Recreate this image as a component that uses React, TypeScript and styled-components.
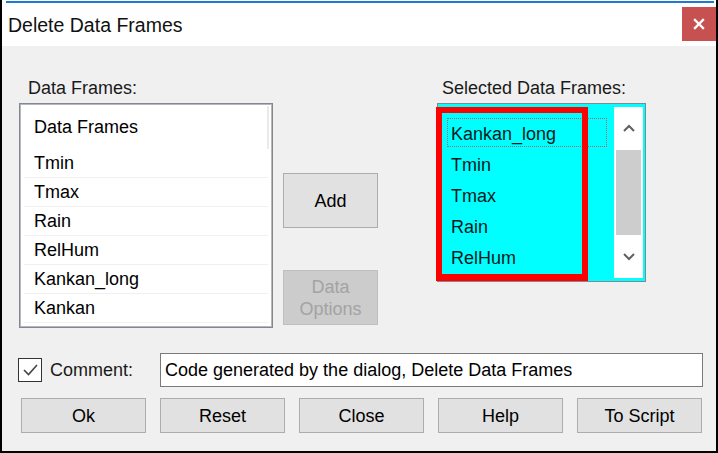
import React from "react";
import styled, { createGlobalStyle } from "styled-components";

const Global = createGlobalStyle`
  html, body { margin: 0; padding: 0; background: #ffffff; }
  body { font-family: "Liberation Sans", Arial, sans-serif; }
  * { box-sizing: border-box; }
`;

const Window = styled.div`
  width: 718px;
  height: 453px;
  display: flex;
  flex-direction: column;
  border-left: 2px solid #000;
  border-right: 2px solid #000;
  border-bottom: 2px solid #000;
  background: #f0f0f0;
  font-family: "Liberation Sans", Arial, sans-serif;
  font-size: 18px;
  color: #000;
`;

const TitleBar = styled.div`
  position: relative;
  height: 46px;
  flex: none;
  display: flex;
  align-items: center;
  justify-content: space-between;
  background: #ffffff;
  &::before {
    content: "";
    position: absolute;
    top: 1px;
    left: 4px;
    right: 2px;
    height: 2px;
    background: #1c7ad4;
  }
`;

const Title = styled.div`
  margin-left: 6px;
  margin-top: 5px;
  font-family: "Liberation Sans", Arial, sans-serif;
  font-size: 19.5px;
  color: #111;
`;

const CloseButton = styled.div`
  width: 34px;
  height: 34px;
  margin-top: 2px;
  background: #c75050;
  display: flex;
  align-items: center;
  justify-content: center;
`;

const Body = styled.div`
  flex: 1;
  display: flex;
  flex-direction: column;
  padding: 32px 0 0 17px;
`;

const TopArea = styled.div`
  display: flex;
  align-items: flex-start;
  height: 250px;
`;

const Column = styled.div<{ $width: number; $ml?: number }>`
  position: relative;
  width: ${(p) => p.$width}px;
  margin-left: ${(p) => p.$ml ?? 0}px;
  display: flex;
  flex-direction: column;
`;

const FieldLabel = styled.div<{ $pl: number }>`
  height: 20px;
  line-height: 20px;
  padding-left: ${(p) => p.$pl}px;
  margin-bottom: 5px;
  color: #1a1a1a;
  white-space: nowrap;
`;

const ListView = styled.div`
  width: 254px;
  height: 225px;
  background: #fff;
  border: 1px solid #828790;
  box-shadow: inset 0 0 0 1px #b4b8be;
  padding: 2px 2px 0 2px;
  overflow: hidden;
`;

const HeaderRow = styled.div`
  height: 43px;
  display: flex;
`;

const HeaderCell = styled.div`
  width: 247px;
  display: flex;
  align-items: center;
  padding-left: 12px;
  border-right: 2px solid #eaeaea;
`;

const Row = styled.div`
  height: 29px;
  line-height: 29px;
  margin: 0 2px 0 2px;
  padding-left: 10px;
  border-bottom: 1px solid #f0f0f0;
  white-space: nowrap;
`;

const MidColumn = styled.div`
  width: 95px;
  margin-left: 10px;
  padding-top: 95px;
  display: flex;
  flex-direction: column;
  gap: 42px;
`;

const Button = styled.div<{ $disabled?: boolean; $tall?: boolean }>`
  height: ${(p) => (p.$tall ? 55 : 35)}px;
  display: flex;
  align-items: center;
  justify-content: center;
  text-align: center;
  line-height: 22px;
  background: ${(p) => (p.$disabled ? "#cccccc" : "#e1e1e1")};
  border: 1px solid ${(p) => (p.$disabled ? "#bfbfbf" : "#adadad")};
  color: ${(p) => (p.$disabled ? "#a3a3a3" : "#000")};
  white-space: nowrap;
`;

const ListBox = styled.div`
  width: 209px;
  height: 179px;
  margin-left: 1px;
  border: 1px solid #828790;
  background: #00ffff;
  display: flex;
`;

const Items = styled.div`
  flex: 1;
  padding: 14px 0 0 9px;
`;

const Item = styled.div<{ $focused?: boolean }>`
  width: 160px;
  height: 29px;
  margin-bottom: 2px;
  padding-top: 3px;
  line-height: 24px;
  padding-left: 3px;
  border: 1px dotted ${(p) => (p.$focused ? "#b06060" : "transparent")};
  color: #0a1a1a;
`;

const ScrollBar = styled.div`
  width: 29px;
  margin: 3px 2px 3px 0;
  background: #ffffff;
  display: flex;
  flex-direction: column;
`;

const Arrow = styled.div`
  height: 42px;
  display: flex;
  align-items: center;
  justify-content: center;
`;

const Thumb = styled.div`
  flex: 1;
  margin: 1px 2px;
  background: #cdcdcd;
`;

const Highlight = styled.div`
  position: absolute;
  left: 0;
  top: 29px;
  width: 152px;
  height: 174px;
  border: 6px solid #ff0000;
  border-bottom-width: 7px;
  pointer-events: none;
`;

const CommentRow = styled.div`
  margin-top: 25px;
  height: 34px;
  display: flex;
  align-items: center;
`;

const CheckBox = styled.div`
  width: 24px;
  height: 24px;
  margin-left: -1px;
  border: 1px solid #333;
  background: #fff;
  display: flex;
  align-items: center;
  justify-content: center;
`;

const CommentLabel = styled.div`
  width: 118px;
  padding-left: 8px;
  color: #1a1a1a;
`;

const TextBox = styled.div`
  width: 543px;
  height: 34px;
  border: 1px solid #7a7a7a;
  background: #fff;
  padding-left: 4px;
  display: flex;
  align-items: center;
  white-space: nowrap;
`;

const ButtonRow = styled.div`
  margin-top: 11px;
  margin-left: 2px;
  width: 681px;
  display: grid;
  grid-template-columns: repeat(5, 125px);
  justify-content: space-between;
`;

const leftRows = ["Tmin", "Tmax", "Rain", "RelHum", "Kankan_long", "Kankan"];
const selected = ["Kankan_long", "Tmin", "Tmax", "Rain", "RelHum"];
const actions = ["Ok", "Reset", "Close", "Help", "To Script"];

export default function App() {
  return (
    <>
      <Global />
      <Window>
        <TitleBar>
          <Title>Delete Data Frames</Title>
          <CloseButton>
            <svg width="12" height="12" viewBox="0 0 12 12">
              <path d="M2 2 L10 10 M10 2 L2 10" stroke="#fff" strokeWidth="2.4" strokeLinecap="square" />
            </svg>
          </CloseButton>
        </TitleBar>
        <Body>
          <TopArea>
            <Column $width={254}>
              <FieldLabel $pl={9}>Data Frames:</FieldLabel>
              <ListView>
                <HeaderRow>
                  <HeaderCell>Data Frames</HeaderCell>
                </HeaderRow>
                {leftRows.map((r) => (
                  <Row key={r}>{r}</Row>
                ))}
              </ListView>
            </Column>
            <MidColumn>
              <Button $tall>Add</Button>
              <Button $tall $disabled>
                Data
                <br />
                Options
              </Button>
            </MidColumn>
            <Column $width={210} $ml={58}>
              <FieldLabel $pl={6}>Selected Data Frames:</FieldLabel>
              <ListBox>
                <Items>
                  {selected.map((s, i) => (
                    <Item key={s} $focused={i === 0}>
                      {s}
                    </Item>
                  ))}
                </Items>
                <ScrollBar>
                  <Arrow>
                    <svg width="12" height="8" viewBox="0 0 12 8">
                      <polyline points="1,7 6,2 11,7" fill="none" stroke="#606060" strokeWidth="2" />
                    </svg>
                  </Arrow>
                  <Thumb />
                  <Arrow>
                    <svg width="12" height="8" viewBox="0 0 12 8">
                      <polyline points="1,1 6,6 11,1" fill="none" stroke="#606060" strokeWidth="2" />
                    </svg>
                  </Arrow>
                </ScrollBar>
              </ListBox>
              <Highlight />
            </Column>
          </TopArea>
          <CommentRow>
            <CheckBox>
              <svg width="17" height="14" viewBox="0 0 17 14">
                <polyline points="2,7 6.5,11.5 15,2" fill="none" stroke="#444" strokeWidth="1.6" />
              </svg>
            </CheckBox>
            <CommentLabel>Comment:</CommentLabel>
            <TextBox>Code generated by the dialog, Delete Data Frames</TextBox>
          </CommentRow>
          <ButtonRow>
            {actions.map((a) => (
              <Button key={a}>{a}</Button>
            ))}
          </ButtonRow>
        </Body>
      </Window>
    </>
  );
}
